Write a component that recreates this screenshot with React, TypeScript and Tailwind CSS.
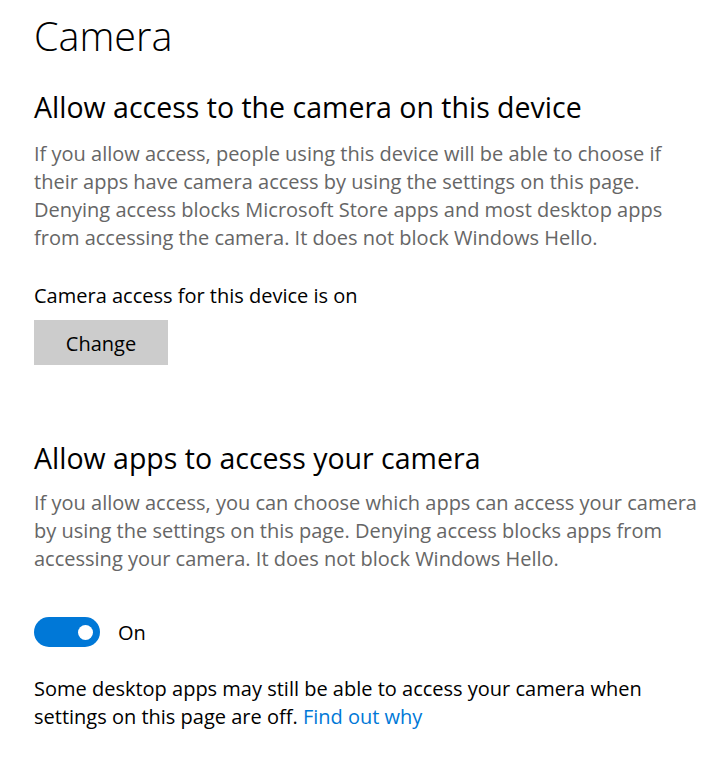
export default function App() {
  return (
    <div
      className="min-h-[758px] bg-white pl-[34px] pr-4 pt-[10px] text-black"
      style={{ fontFamily: '"Open Sans", "Noto Sans", sans-serif' }}
    >
      <h1 className="text-[39.5px] leading-[52px] font-light">Camera</h1>

      <h2 className="mt-[27px] text-[28.5px] leading-[36px]">
        Allow access to the camera on this device
      </h2>
      <p className="mt-[15px] text-[20px] leading-[28px] text-[#666666]">
        If you allow access, people using this device will be able to choose if
        <br />
        their apps have camera access by using the settings on this page.
        <br />
        Denying access blocks Microsoft Store apps and most desktop apps
        <br />
        from accessing the camera. It does not block Windows Hello.
      </p>

      <p className="mt-[30px] text-[20px] leading-[28px]">
        Camera access for this device is on
      </p>
      <button className="mt-[10px] h-[45px] w-[134px] bg-[#cccccc] pt-[3px] text-[20px]">
        Change
      </button>

      <h2 className="mt-[75px] text-[28.5px] leading-[36px]">
        Allow apps to access your camera
      </h2>
      <p className="mt-[13px] text-[20px] leading-[28px] text-[#666666]">
        If you allow access, you can choose which apps can access your camera
        <br />
        by using the settings on this page. Denying access blocks apps from
        <br />
        accessing your camera. It does not block Windows Hello.
      </p>

      <div className="mt-[44px] flex items-center gap-[18px]">
        <div className="relative h-[30px] w-[66px] rounded-full bg-[#0078d7]">
          <span className="absolute right-[7px] top-[8px] h-[15px] w-[15px] rounded-full bg-white" />
        </div>
        <span className="pt-[2px] text-[20px] leading-[28px]">On</span>
      </div>

      <p className="mt-[28px] text-[20px] leading-[28px]">
        Some desktop apps may still be able to access your camera when
        <br />
        settings on this page are off.{' '}
        <a className="text-[#0078d7]">Find out why</a>
      </p>
    </div>
  );
}
